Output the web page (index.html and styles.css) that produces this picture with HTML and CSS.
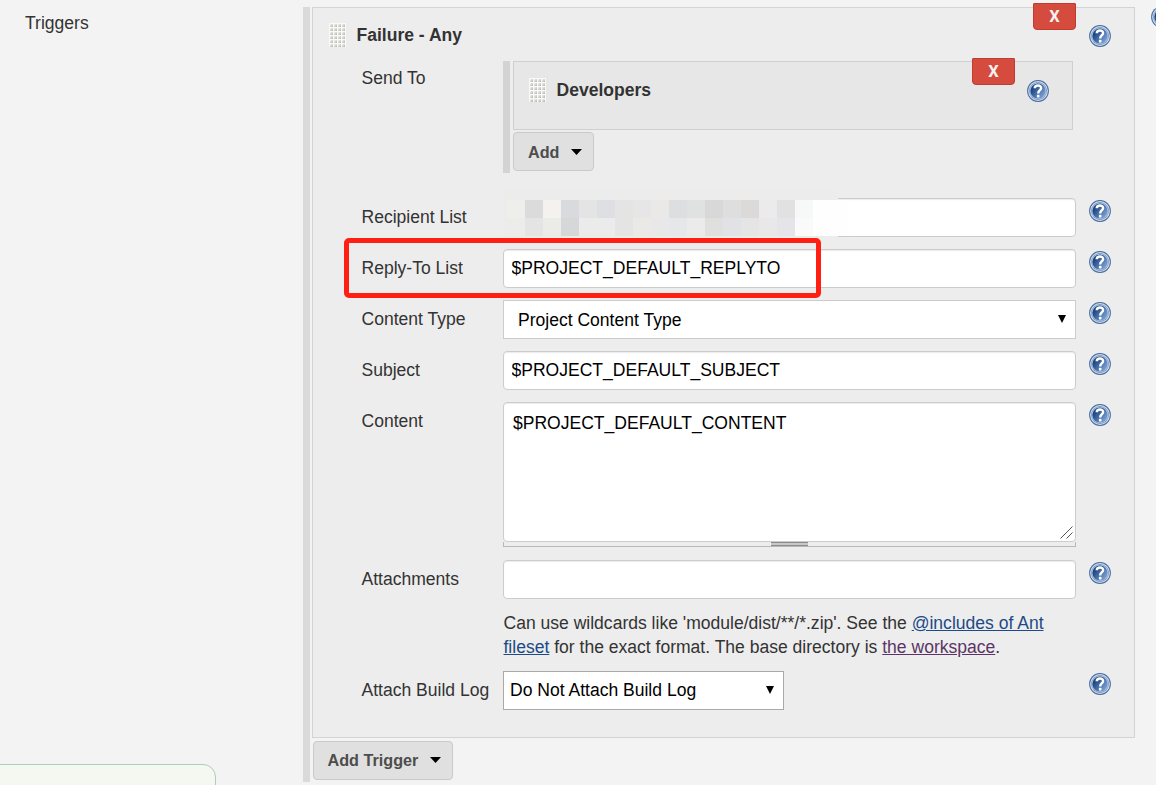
FILE: index.html
```
<!DOCTYPE html>
<html lang="en">
<head>
  <meta charset="UTF-8" />
  <meta name="viewport" content="width=device-width, initial-scale=1.0" />
  <title>Editable Email Notification</title>
  <link rel="stylesheet" href="styles.css">
</head>
<body>
  <svg width="0" height="0" class="defs">
    <defs>
      <linearGradient id="help-fill" x1="0" y1="0.2" x2="1" y2="0.9">
        <stop offset="0.15" stop-color="#1c4484" />
        <stop offset="0.9" stop-color="#7da3d4" />
      </linearGradient>
      <symbol id="help" viewBox="0 0 22 22">
        <circle cx="11" cy="11" r="10.9" fill="#456b9f" />
        <circle cx="11" cy="11" r="9.9" fill="#d3dfed" />
        <circle cx="11" cy="11" r="8.9" fill="#7192c0" />
        <circle cx="11" cy="11" r="8.3" fill="#b4c7e0" />
        <circle cx="11" cy="11" r="7.6" fill="url(#help-fill)" />
        <path d="M7.7 8.2C7.8 4.5 14.2 4.6 14.1 8.1C14 10.5 11.2 10.4 11.2 13.4" fill="none" stroke="#fff" stroke-width="2.4" />
        <rect x="9.9" y="14.8" width="2.6" height="2.6" rx="0.6" fill="#fff" />
      </symbol>
    </defs>
  </svg>

  <div class="page">
    <div class="setting-name">Triggers</div>
    <div class="repeated">
      <div class="panel">
        <button class="delete">X</button>
        <div class="panel-head">
          <span class="grip"></span>
          <b>Failure - Any</b>
          <svg class="help"><use href="#help" /></svg>
        </div>

        <div class="row send-to">
          <label>Send To</label>
          <div class="repeated inner">
            <div class="recipient">
              <button class="delete">X</button>
              <span class="grip"></span>
              <b>Developers</b>
              <svg class="help"><use href="#help" /></svg>
            </div>
            <button class="add">Add <i class="caret"></i></button>
          </div>
        </div>

        <div class="row">
          <label>Recipient List</label>
          <div class="field">
            <input type="text" aria-label="Recipient List" />
            <div class="mask"><div id="mosaic" class="mosaic"></div></div>
          </div>
          <svg class="help"><use href="#help" /></svg>
        </div>

        <div class="row">
          <label>Reply-To List</label>
          <div class="field"><input type="text" value="$PROJECT_DEFAULT_REPLYTO" /></div>
          <svg class="help"><use href="#help" /></svg>
          <div class="highlight"></div>
        </div>

        <div class="row">
          <label>Content Type</label>
          <div class="field">
            <select class="wide"><option>Project Content Type</option></select>
            <i class="arrow"></i>
          </div>
          <svg class="help"><use href="#help" /></svg>
        </div>

        <div class="row">
          <label>Subject</label>
          <div class="field"><input type="text" value="$PROJECT_DEFAULT_SUBJECT" /></div>
          <svg class="help"><use href="#help" /></svg>
        </div>

        <div class="row">
          <label>Content</label>
          <div class="field">
            <textarea>$PROJECT_DEFAULT_CONTENT</textarea>
            <svg class="resizer" viewBox="0 0 13 13"><path d="M0.5 12.5L12.5 0.5M6.5 12.5L12.5 6.5" /></svg>
            <div class="handle"><span></span></div>
          </div>
          <svg class="help"><use href="#help" /></svg>
        </div>

        <div class="row">
          <label>Attachments</label>
          <div class="field">
            <input type="text" aria-label="Attachments" />
            <p class="hint">Can use wildcards like 'module/dist/**/*.zip'. See the <a href="#">@includes of Ant<br>fileset</a> for the exact format. The base directory is <a href="#" class="seen">the workspace</a>.</p>
          </div>
          <svg class="help"><use href="#help" /></svg>
        </div>

        <div class="row">
          <label>Attach Build Log</label>
          <div class="field short">
            <select><option>Do Not Attach Build Log</option></select>
            <i class="arrow"></i>
          </div>
          <svg class="help"><use href="#help" /></svg>
        </div>
      </div>
      <button class="add">Add Trigger <i class="caret"></i></button>
    </div>
    <svg class="help outer-help"><use href="#help" /></svg>
    <div class="bottom-bar"></div>
  </div>

  <script>
    // Tile colours hiding the addresses, one array per row
    const tiles = [
      ['eeeeeb', 'dbdbdb', 'f3f2ef', 'd9dadd', 'e4e4e5', 'dedfe2', 'e4e4e4', 'e6e6e6', 'eae9e7', 'dcdee0', 'dfe2e1', 'd8d8d8', 'dedede', 'dbdad8', 'ebebeb', 'e1e1e1', 'f6f9f8', 'fefefe', 'fefefe'],
      ['ececea', 'e4e4e4', 'ebebe8', 'd6d7d9', 'ebebeb', 'ebebeb', 'e4e4e4', 'eae9e6', 'e8e8e9', 'e5e7ea', 'ebebeb', 'dfdfdd', 'e1e2e5', 'e5e5e5', 'e8e8e9', 'e5e5e9', 'fafafa', 'fefefe', 'fefefe']
    ];
    const mosaic = document.getElementById('mosaic');
    tiles.flat().forEach((color) => {
      const tile = document.createElement('span');
      tile.style.backgroundColor = '#' + color;
      mosaic.appendChild(tile);
    });
  </script>
</body>
</html>
```
FILE: styles.css
```
* {
  box-sizing: border-box;
}
body {
  margin: 0;
  background-color: #f3f3f3;
  color: #333;
  font-family: "Liberation Sans", Arial, sans-serif;
  font-size: 17.55px;
  line-height: 24px;
}
.defs {
  position: absolute;
}
.page {
  position: relative;
  display: flex;
  height: 785px;
  padding-top: 7px;
  overflow: hidden;
}
.setting-name {
  width: 303px;
  padding: 4px 0 0 25px;
}
.repeated {
  width: 832px;
  height: 775px;
  padding-left: 2px;
  border-left: 7px solid #dadada;
}
.panel {
  position: relative;
  height: 731px;
  border: 1px solid #d3d3d3;
  background-color: #ededed;
}
.panel-head {
  display: flex;
  height: 53px;
  padding: 15px 23px 0 16px;
}
.panel-head b {
  margin-left: 10.5px;
}
.panel-head .help {
  margin: 2px 0 0 auto;
}
.grip {
  width: 17px;
  height: 24px;
  background:
    linear-gradient(#fafaf9 1px, transparent 1px) 0 0 / 4px 4px,
    linear-gradient(90deg, #fafaf9 1px, transparent 1px) 0 0 / 4px 4px,
    linear-gradient(135deg, #f2f2f0 30%, #bcbcb7 90%) 0 0 / 4px 4px;
}
.row {
  position: relative;
  display: grid;
  grid-template-columns: 142px 573px 22px;
  margin: 0 0 12px 48px;
}
.row label {
  padding: 7px 0 0 0.5px;
}
.row > .help {
  margin: 2px 0 0 13px;
}
.help {
  display: block;
  width: 22px;
  height: 22px;
}
.row.send-to {
  margin-bottom: 25px;
}
.send-to label {
  padding-top: 5px;
}
.inner {
  width: 570px;
  height: 112px;
  padding-left: 3px;
  border-left-color: #d3d3d3;
}
.recipient {
  position: relative;
  display: flex;
  height: 69px;
  margin-bottom: 2px;
  padding: 16px 23px 0 15px;
  border: 1px solid #cfcfcf;
  background-color: #e7e7e7;
}
.recipient b {
  margin-left: 10.5px;
}
.recipient .help {
  margin: 2px 0 0 auto;
}
.delete {
  position: absolute;
  top: -5px;
  right: 58px;
  width: 43px;
  height: 27px;
  padding: 1px 0 0;
  border: 1px solid #bf3c30;
  border-radius: 1px 1px 4px 4px;
  background-color: #d54b3d;
  color: #f3f3f3;
  font: bold 16.5px/24px Roboto, sans-serif;
}
.recipient .delete {
  top: -4px;
  right: 57px;
}
.add {
  display: flex;
  align-items: center;
  height: 39px;
  padding: 1px 11px 0 14px;
  border: 1px solid #cacaca;
  border-radius: 4px;
  background-color: #e0e0e0;
  color: #4d4d4d;
  font: bold 16.2px "Liberation Sans", Arial, sans-serif;
}
.inner .add {
  width: 81px;
}
.panel + .add {
  width: 140px;
  margin: 3px 0 0 1px;
  padding: 0 11px 1px 13.5px;
}
.caret {
  width: 11px;
  height: 6px;
  margin-left: auto;
  background-color: #000;
  clip-path: polygon(0 0, 100% 0, 50% 100%);
}
.field {
  position: relative;
}
input,
select,
textarea {
  display: block;
  width: 100%;
  height: 39px;
  margin: 0;
  padding: 0 7.5px;
  border: 1px solid #ccc;
  border-radius: 4px;
  outline: none;
  background-color: #fff;
  box-shadow: inset 0 1px 1px rgba(0, 0, 0, 0.08);
  color: #000;
  font: 17.55px "Liberation Sans", Arial, sans-serif;
}
select {
  appearance: none;
  padding: 0 6px 2px;
  border-color: #a9a9a9;
  border-radius: 0;
  box-shadow: none;
}
select.wide {
  padding: 0 14px;
  border-color: #ccc;
}
.short {
  width: 281px;
}
.arrow {
  position: absolute;
  top: 15px;
  right: 10px;
  width: 8px;
  height: 8px;
  background-color: #000;
  clip-path: polygon(0 0, 100% 0, 50% 100%);
}
textarea {
  height: 140px;
  padding: 9px;
  line-height: 22px;
  resize: none;
}
.resizer {
  position: absolute;
  top: 124px;
  right: 3px;
  width: 13px;
  height: 13px;
  stroke: #555;
  stroke-width: 1;
}
.handle {
  display: flex;
  justify-content: center;
  height: 5px;
  border: 1px solid #b9b9b4;
  border-top: 0;
}
.handle span {
  width: 37px;
  height: 4px;
  border: 1px solid #8c8c8c;
  border-width: 1px 0;
  background-color: #c8c8c8;
}
.row:has(.handle) {
  margin-bottom: 13px;
}
.hint {
  height: 60px;
  margin: 0;
  padding: 12px 0 0 0.5px;
  white-space: nowrap;
}
a {
  color: #204a87;
}
a.seen {
  color: #5c3566;
}
.mask {
  position: absolute;
  top: -8px;
  left: 0;
  width: 335px;
  height: 48px;
  padding: 10px 0 0 4px;
  background-color: #ececec;
}
.mosaic {
  display: grid;
  grid-template-columns: repeat(19, 18px);
  grid-auto-rows: 18px;
  width: 342px;
}
.highlight {
  position: absolute;
  top: -11px;
  left: -17px;
  width: 477px;
  height: 60px;
  border: 5px solid #ff1f13;
  border-radius: 5px;
}
.outer-help {
  position: absolute;
  top: 6px;
  left: 1151px;
}
.bottom-bar {
  position: absolute;
  bottom: -20px;
  left: -20px;
  width: 236px;
  height: 41px;
  border: 1px solid #abcdbd;
  border-radius: 13px;
  background-color: #f5f8f0;
}
```
